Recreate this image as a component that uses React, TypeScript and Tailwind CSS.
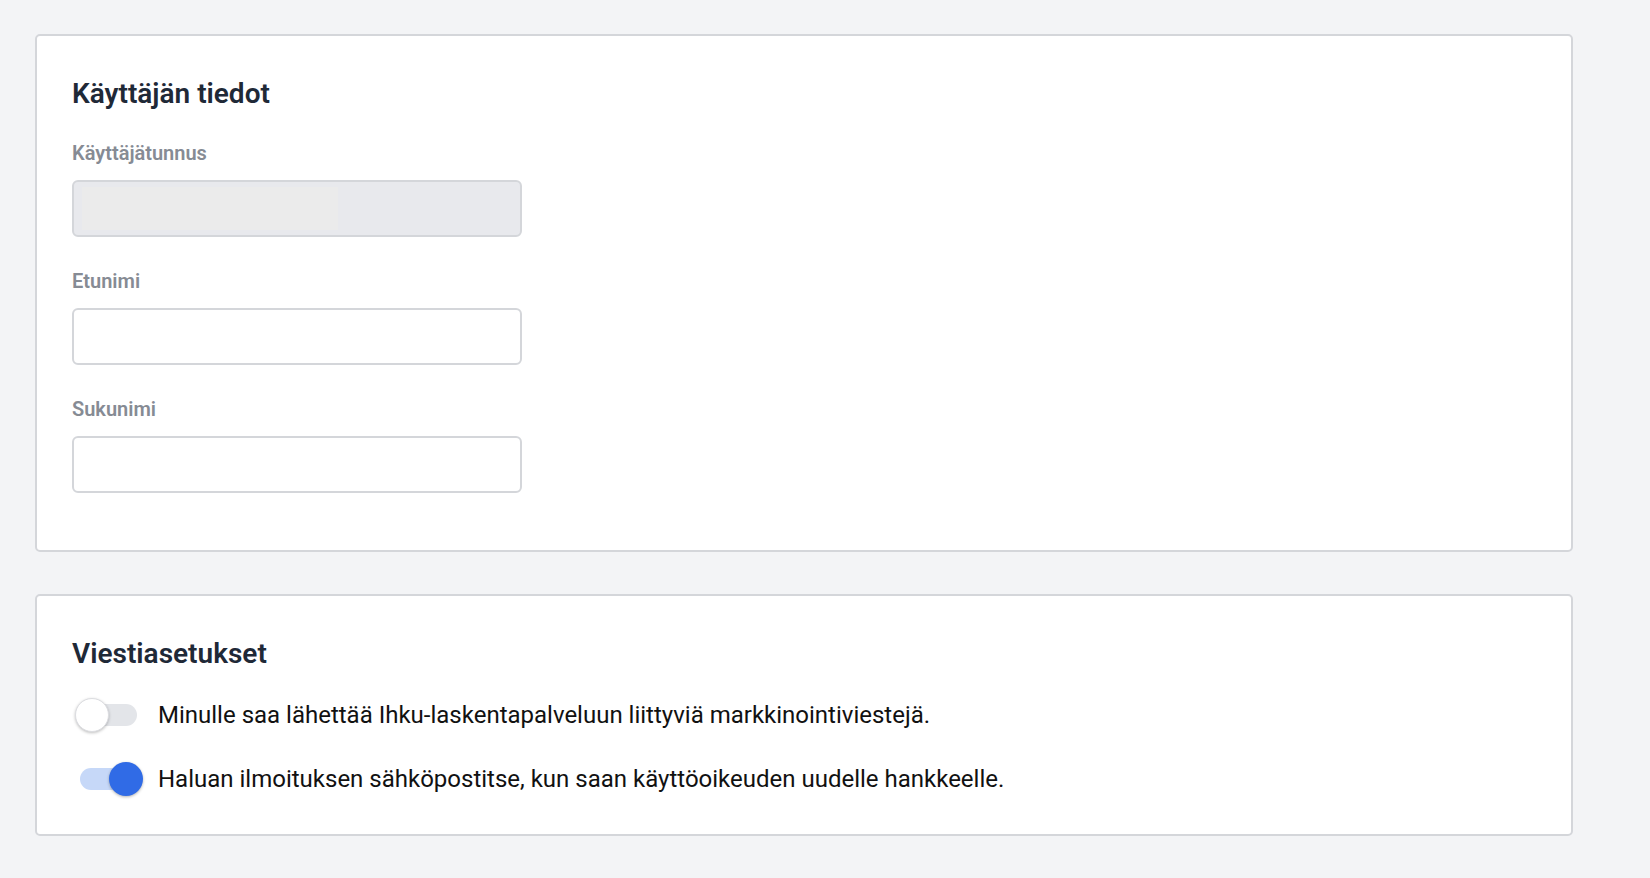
import { useState } from 'react'

interface FieldProps {
  label: string
  disabled?: boolean
}

function Field({ label, disabled = false }: FieldProps) {
  return (
    <div className="mt-[30px] first:mt-[27px]">
      <label className="block text-[20px] leading-[28px] font-semibold text-[#868b94] mb-[13px]">
        {label}
      </label>
      {disabled ? (
        <div className="flex h-[57px] w-[450px] rounded-[6px] border-2 border-[#d4d6da] bg-[#e8e9ed] py-[5px] pl-[8px]">
          <div className="w-[256px] h-full bg-[#ebebeb]" />
        </div>
      ) : (
        <input
          type="text"
          className="block h-[57px] w-[450px] rounded-[6px] border-2 border-[#d4d6da] bg-white px-3 text-[20px] text-[#111] outline-none"
        />
      )}
    </div>
  )
}

interface ToggleProps {
  label: string
  defaultOn?: boolean
}

function Toggle({ label, defaultOn = false }: ToggleProps) {
  const [on, setOn] = useState(defaultOn)

  return (
    <div className="flex items-center h-[36px]">
      <button
        type="button"
        onClick={() => setOn(!on)}
        className="relative w-[72px] h-[36px] shrink-0"
      >
        <span
          className={
            on
              ? 'absolute left-[8px] top-[7px] w-[57px] h-[22px] rounded-full bg-[#c6d8f8]'
              : 'absolute left-[8px] top-[7px] w-[57px] h-[22px] rounded-full bg-[#e3e5e9]'
          }
        />
        <span
          className={
            on
              ? 'absolute left-[37px] top-[1px] w-[34px] h-[34px] rounded-full bg-[#306be6] shadow-[0_1px_3px_rgba(0,0,0,0.3)]'
              : 'absolute left-[3px] top-[1px] w-[34px] h-[34px] rounded-full bg-white border border-[#dcdde1] shadow-[0_1px_3px_rgba(0,0,0,0.25)]'
          }
        />
      </button>
      <span className="ml-[14px] text-[24px] leading-[32px] text-[#111111]">{label}</span>
    </div>
  )
}

export default function App() {
  return (
    <div
      className="min-h-screen bg-[#f3f4f6] pl-[35px] pt-[34px] pb-[44px]"
      style={{ fontFamily: 'Roboto, "Noto Sans", sans-serif' }}
    >
      <div className="w-[1538px] flex flex-col gap-[42px]">
        <section className="rounded-[5px] border-2 border-[#d4d6da] bg-white px-[35px] pt-[40px] pb-[57px]">
          <h2 className="text-[28px] leading-[36px] font-semibold text-[#1f2937]">Käyttäjän tiedot</h2>
          <div>
            <Field label="Käyttäjätunnus" disabled />
            <Field label="Etunimi" />
            <Field label="Sukunimi" />
          </div>
        </section>

        <section className="rounded-[5px] border-2 border-[#d4d6da] bg-white px-[35px] pt-[40px] pb-[37px]">
          <h2 className="text-[28px] leading-[36px] font-semibold text-[#1f2937]">Viestiasetukset</h2>
          <div className="mt-[25px] flex flex-col gap-[28px]">
            <Toggle label="Minulle saa lähettää Ihku-laskentapalveluun liittyviä markkinointiviestejä." />
            <Toggle label="Haluan ilmoituksen sähköpostitse, kun saan käyttöoikeuden uudelle hankkeelle." defaultOn />
          </div>
        </section>
      </div>
    </div>
  )
}
